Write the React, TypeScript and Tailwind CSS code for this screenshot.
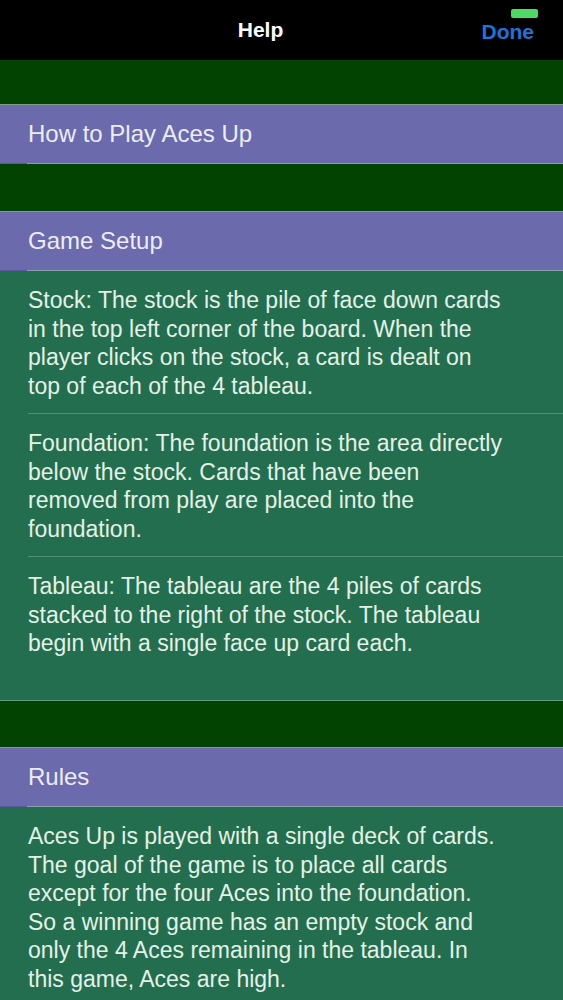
import React from "react";

const font = { fontFamily: '"Liberation Sans", Arial, sans-serif' };

function Header({ title }: { title: string }) {
  return (
    <div className="border-t border-[#7f9a93] bg-[#6a6aac]">
      <div className="h-[58px] flex items-center pl-[28px] text-[24px] text-[#ececf8]">{title}</div>
      <div className="flex h-px">
        <div className="w-[27px] bg-[#5a5a9a]" />
        <div className="flex-1 bg-[#8aa0b0]" />
      </div>
    </div>
  );
}

function Lines({ lines }: { lines: string[] }) {
  return (
    <>
      {lines.map((l, i) => (
        <div key={i} className="whitespace-nowrap">
          {l}
        </div>
      ))}
    </>
  );
}

function Row({ lines, last }: { lines: string[]; last?: boolean }) {
  return (
    <div className="bg-[#236e4f] pl-[28px]">
      <div
        className={
          "h-[143px] pt-[15px] text-[23px] leading-[28.5px] text-[#e4f1e6] " +
          (last ? "" : "border-b border-[#4f9073]")
        }
      >
        <Lines lines={lines} />
      </div>
    </div>
  );
}

export default function App() {
  return (
    <div className="w-[563px] h-[1000px] overflow-hidden bg-[#024302]" style={font}>
      <div className="h-[60px] bg-black relative flex items-center justify-center">
        <span className="mr-[42px] text-[21px] font-semibold text-white">Help</span>
        <span className="absolute right-[29px] top-[16px] text-[21px] font-semibold text-[#1f74dc]">Done</span>
        <span className="absolute right-[25px] top-[9px] w-[27px] h-[9px] rounded-[2px] bg-[#4cd964]" />
      </div>
      <div className="h-[44px]" />
      <Header title="How to Play Aces Up" />
      <div className="h-[47px]" />
      <Header title="Game Setup" />
      <Row
        lines={[
          "Stock: The stock is the pile of face down cards",
          "in the top left corner of the board. When the",
          "player clicks on the stock, a card is dealt on",
          "top of each of the 4 tableau.",
        ]}
      />
      <Row
        lines={[
          "Foundation: The foundation is the area directly",
          "below the stock. Cards that have been",
          "removed from play are placed into the",
          "foundation.",
        ]}
      />
      <Row
        last
        lines={[
          "Tableau: The tableau are the 4 piles of cards",
          "stacked to the right of the stock. The tableau",
          "begin with a single face up card each.",
        ]}
      />
      <div className="h-px bg-[#5f9a7f]" />
      <div className="h-[46px]" />
      <Header title="Rules" />
      <div className="bg-[#236e4f] pl-[28px]">
        <div className="pt-[15px] pb-[20px] text-[23px] leading-[28.5px] text-[#e4f1e6]">
          <Lines
            lines={[
              "Aces Up is played with a single deck of cards.",
              "The goal of the game is to place all cards",
              "except for the four Aces into the foundation.",
              "So a winning game has an empty stock and",
              "only the 4 Aces remaining in the tableau. In",
              "this game, Aces are high.",
            ]}
          />
        </div>
      </div>
    </div>
  );
}
